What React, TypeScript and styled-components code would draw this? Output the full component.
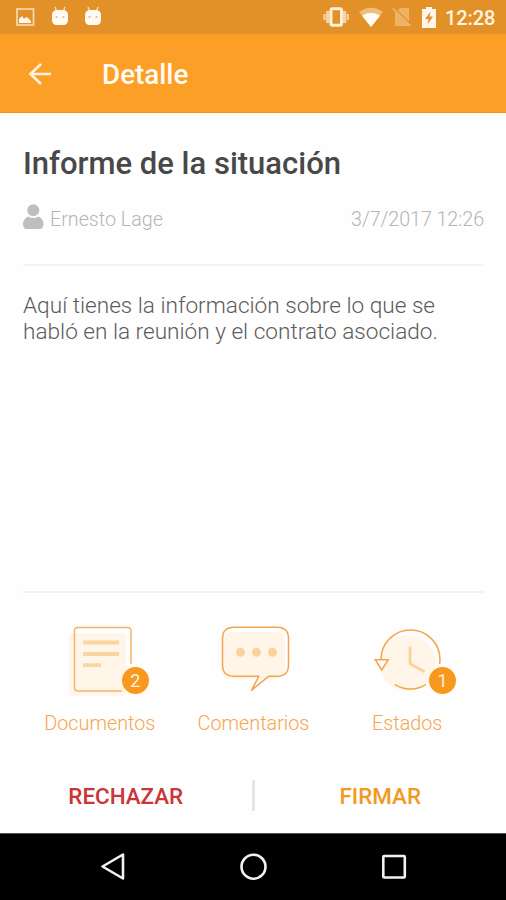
import React from "react";
import styled, { createGlobalStyle } from "styled-components";

const GlobalStyle = createGlobalStyle`
  * { box-sizing: border-box; }
  body { margin: 0; background: #fff; font-family: Roboto, "Liberation Sans", sans-serif; }
  button { border: 0; padding: 0; background: none; font-family: inherit; cursor: pointer; }
  svg { display: block; flex: none; }
`;

const Screen = styled.div`
  width: 506px;
  height: 900px;
  display: flex;
  flex-direction: column;
  background: #fefefe;
  overflow: hidden;
`;

const StatusBar = styled.header`
  height: 34px;
  flex: none;
  display: flex;
  align-items: center;
  justify-content: space-between;
  padding: 0 11px 0 16px;
  background: #e29128;
`;

const StatusGroup = styled.div<{ $gap: number }>`
  display: flex;
  align-items: center;
  gap: ${(p) => p.$gap}px;
`;

const Clock = styled.span`
  width: 50px;
  font-size: 20px;
  font-weight: 500;
  line-height: 34px;
  letter-spacing: -0.1px;
  padding-top: 2px;
  color: #fff5e6;
  white-space: nowrap;
`;

const AppBar = styled.div`
  height: 79px;
  flex: none;
  display: flex;
  align-items: center;
  padding-left: 28px;
  background: #fc9f26;
  border-bottom: 1px solid #f39416;
`;

const BackButton = styled.button`
  width: 74px;
  padding-top: 2px;
`;

const BarTitle = styled.h1`
  margin: 3px 0 0;
  font-size: 27.8px;
  font-weight: 500;
  line-height: 32px;
  color: #fffaf2;
`;

const Content = styled.main`
  flex: 1;
  min-height: 0;
  display: flex;
  flex-direction: column;
  padding: 0 22px 0 23px;
`;

const Subject = styled.h2`
  margin: 32px 0 0;
  font-size: 31px;
  font-weight: 500;
  line-height: 38px;
  color: #484848;
  white-space: nowrap;
`;

const MetaRow = styled.div`
  height: 83px;
  padding-top: 21px;
  display: flex;
  align-items: flex-start;
  border-bottom: 2px solid #f4f4f4;
  font-size: 19.7px;
  font-weight: 300;
  line-height: 32px;
  color: #b5b5b5;
`;

const Author = styled.span`
  margin-left: 6px;
  flex: 1;
`;

const DateText = styled.time`
  letter-spacing: -0.06px;
`;

const Message = styled.p`
  flex: 1;
  margin: 0;
  padding-top: 27px;
  font-size: 22.6px;
  font-weight: 300;
  line-height: 26px;
  color: #5c5c5c;
  white-space: pre-line;
`;

const Tiles = styled.nav`
  height: 163px;
  display: flex;
  padding-top: 27px;
  border-top: 2px solid #f1f1f1;
`;

const Tile = styled.button`
  flex: 1;
  display: flex;
  flex-direction: column;
  align-items: center;
`;

const IconBox = styled.span`
  position: relative;
  width: 100px;
  height: 88px;
`;

const Badge = styled.span`
  position: absolute;
  left: 72px;
  top: 47px;
  width: 27px;
  height: 27px;
  border-radius: 50%;
  background: #f8991d;
  color: #fff3e0;
  font-size: 18px;
  line-height: 28px;
  text-align: center;
`;

const TileLabel = styled.span`
  font-size: 19.8px;
  font-weight: 300;
  line-height: 32px;
  color: #f5a550;
`;

const Actions = styled.div`
  height: 79px;
  margin: 0 -22px 0 -23px;
  display: flex;
  align-items: flex-start;
  padding-top: 26px;
`;

const Action = styled.button<{ $color: string }>`
  flex: 1;
  font-size: 22.4px;
  font-weight: 500;
  line-height: 32px;
  color: ${(p) => p.$color};
`;

const ActionDivider = styled.span`
  width: 3px;
  height: 31px;
  background: #e5e5e5;
`;

const NavBar = styled.footer`
  height: 67px;
  flex: none;
  display: flex;
  justify-content: space-between;
  padding: 18px 97px 0 98px;
  background: #000;
  border-top: 1px solid #555;
`;

const ImageIcon = () => (
  <svg width="19" height="18" viewBox="0 0 19 18">
    <rect x="1" y="1" width="16.5" height="16" fill="none" stroke="#f8d4a6" strokeWidth="1.8" />
    <path d="M3 15v-4l3-3 2 3 2-2 2 1 3 3v2z" fill="#fff9f0" />
  </svg>
);

const BotIcon = () => (
  <svg width="18" height="22" viewBox="0 0 18 22">
    <path d="M4 1l1.5 4M14 1l-1.5 4" stroke="#fbdcb6" strokeWidth="1.4" />
    <path d="M5 4h8q4 1 4 5v5q0 5-5 5H6q-5 0-5-5V9q0-4 4-5z" fill="#fffaf3" />
    <circle cx="5.500" cy="11" r="1.1" fill="#efb873" />
    <circle cx="12.500" cy="11" r="1.1" fill="#efb873" />
  </svg>
);

const VibrateIcon = () => (
  <svg width="26" height="20" viewBox="0 0 26 20">
    <rect x="8" y="1.8" width="10.5" height="16.4" rx="1.5" fill="none" stroke="#fff0da" strokeWidth="3" />
    <path d="M4.8 4v12M21.500 4v12" stroke="#f7d3a8" strokeWidth="3.500" />
    <path d="M1.500 7v6M24.800 7v6" stroke="#f7d3a8" strokeWidth="2.200" />
  </svg>
);

const WifiIcon = () => (
  <svg width="24" height="20" viewBox="0 0 24 20">
    <path d="M0 5Q12-3.500 24 5L12 20z" fill="#f1bd7b" />
    <path d="M3 8.800Q12 2.500 21 8.800L12 20z" fill="#fffcf6" />
  </svg>
);

const NoSimIcon = () => (
  <svg width="20" height="20" viewBox="0 0 20 20">
    <path d="M8 1h9v18H3V6z" fill="#efb269" />
    <path d="M1 .500l18 18" stroke="#e29128" strokeWidth="3" />
    <path d="M1 1.500l17.500 17.500" stroke="#f1bd7b" strokeWidth="1.500" />
  </svg>
);

const BatteryIcon = () => (
  <svg width="14" height="21" viewBox="0 0 14 21">
    <path d="M4 0h6v2h4v19H0V2h4z" fill="#fff6e9" />
    <path d="M8.500 4.500L3 12h3.500l-1 5.500L11 9.500H7.500z" fill="#e09030" />
  </svg>
);

const ArrowBack = () => (
  <svg width="24" height="24" viewBox="0 0 24 24">
    <path d="M13 2L2.500 12 13 22M2.500 12H23" fill="none" stroke="#fff3df" strokeWidth="2.600" />
  </svg>
);

const PersonIcon = () => (
  <svg width="21" height="26" viewBox="0 0 21 26">
    <circle cx="10.300" cy="6.200" r="6" fill="#bebebe" />
    <path d="M5 12.500q5.300 3 10.600 0 4.900 2.500 4.900 7.500 0 5-4 5H4q-4 0-4-5 0-5 5-7.500z" fill="#bebebe" />
  </svg>
);

const DocumentIcon = () => (
  <svg width="100" height="80" viewBox="0 0 100 80">
    <rect x="19" y="13" width="57" height="63" rx="4" fill="#fff5e9" />
    <path d="M72 71H28q-3.500 0-3.500-3.500v-57Q24.500 7.500 28 7.500h49.500q3.500 0 3.500 3.500V44" fill="none" stroke="#f7b16a" strokeWidth="1.500" />
    <path d="M33 22.500h36M33 34h36M33 45.200h18" stroke="#fbd5a0" strokeWidth="3.800" />
  </svg>
);

const ChatIcon = () => (
  <svg width="100" height="80" viewBox="0 0 100 80">
    <path d="M28 12h44q9 0 9 9v29q0 9-9 9H28q-10 0-10-10V22q0-10 10-10z" fill="#fff5e9" />
    <path
      d="M30 7.300h43Q84.500 7.300 84.500 18.500v26.500Q84.500 56.300 73 56.300H64.500L47.500 70.300l7.300-14H30Q18.500 56.300 18.500 45V18.500Q18.500 7.300 30 7.300z"
      fill="none"
      stroke="#f6a44b"
      strokeWidth="1.500"
      strokeLinejoin="round"
    />
    <circle cx="36.500" cy="32.300" r="4.500" fill="#fbd29a" />
    <circle cx="52.500" cy="32.300" r="4.500" fill="#fbd29a" />
    <circle cx="68.500" cy="32.300" r="4.500" fill="#fbd29a" />
  </svg>
);

const HistoryIcon = () => (
  <svg width="100" height="80" viewBox="0 0 100 80">
    <circle cx="50.500" cy="43" r="28" fill="#fff5e9" />
    <path d="M24 39.500A29.500 29.500 0 0 1 83 39.500L82.700 44M38 64.700Q53.500 73.500 69 64.700" fill="none" stroke="#f6a44b" strokeWidth="1.500" />
    <path d="M18.200 39.700h13L24.700 50z" fill="#fff" stroke="#f6a44b" strokeWidth="1.500" />
    <path d="M53 26.500v17.300L67.500 51.700" fill="none" stroke="#fbd29a" strokeWidth="2.800" />
  </svg>
);

const NavBack = () => (
  <svg width="30" height="30" viewBox="0 0 30 30">
    <path d="M25 2.500v24L4.500 14.500z" fill="none" stroke="#f2f2f2" strokeWidth="2.600" strokeLinejoin="round" />
  </svg>
);

const NavHome = () => (
  <svg width="30" height="30" viewBox="0 0 30 30">
    <circle cx="14.500" cy="14.700" r="12" fill="none" stroke="#f2f2f2" strokeWidth="2.600" />
  </svg>
);

const NavRecent = () => (
  <svg width="30" height="30" viewBox="0 0 30 30">
    <rect x="4.300" y="4" width="21.500" height="21.500" rx="1" fill="none" stroke="#f2f2f2" strokeWidth="2.600" />
  </svg>
);

const tiles = [
  { label: "Documentos", Icon: DocumentIcon, count: 2 },
  { label: "Comentarios", Icon: ChatIcon },
  { label: "Estados", Icon: HistoryIcon, count: 1 },
];

export default function App() {
  return (
    <>
      <GlobalStyle />
      <Screen>
        <StatusBar>
          <StatusGroup $gap={15.5}>
            <ImageIcon />
            <BotIcon />
            <BotIcon />
          </StatusGroup>
          <StatusGroup $gap={9.5}>
            <VibrateIcon />
            <WifiIcon />
            <NoSimIcon />
            <BatteryIcon />
            <Clock>12:28</Clock>
          </StatusGroup>
        </StatusBar>
        <AppBar>
          <BackButton aria-label="Volver">
            <ArrowBack />
          </BackButton>
          <BarTitle>Detalle</BarTitle>
        </AppBar>
        <Content>
          <Subject>Informe de la situación</Subject>
          <MetaRow>
            <PersonIcon />
            <Author>Ernesto Lage</Author>
            <DateText>3/7/2017 12:26</DateText>
          </MetaRow>
          <Message>{"Aquí tienes la información sobre lo que se\nhabló en la reunión y el contrato asociado."}</Message>
          <Tiles>
            {tiles.map(({ label, Icon, count }) => (
              <Tile key={label}>
                <IconBox>
                  <Icon />
                  {count && <Badge>{count}</Badge>}
                </IconBox>
                <TileLabel>{label}</TileLabel>
              </Tile>
            ))}
          </Tiles>
          <Actions>
            <Action $color="#cb3537">RECHAZAR</Action>
            <ActionDivider />
            <Action $color="#f19a22">FIRMAR</Action>
          </Actions>
        </Content>
        <NavBar>
          <NavBack />
          <NavHome />
          <NavRecent />
        </NavBar>
      </Screen>
    </>
  );
}
